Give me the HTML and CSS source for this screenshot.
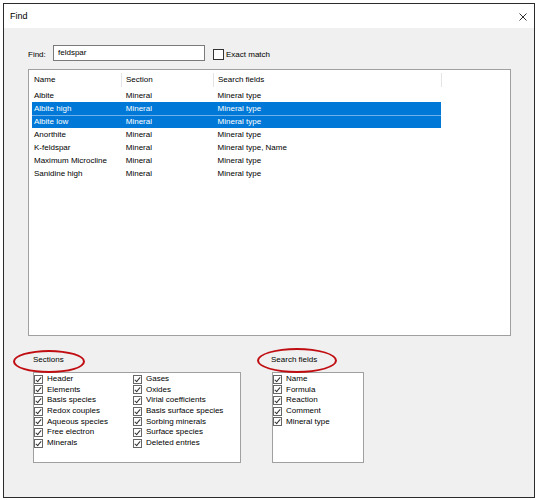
FILE: index.html
```html
<!DOCTYPE html>
<html lang="en">

<head>
  <meta charset="UTF-8">
  <title>Find</title>
  <link rel="stylesheet" href="styles.css">
</head>

<body>
  <div class="window">
    <div class="titlebar">
      <span class="title">Find</span>
      <svg class="close" width="8" height="8" viewBox="0 0 8 8">
        <path d="M0.5 0.5 L7.5 7.5 M7.5 0.5 L0.5 7.5" stroke="#333" stroke-width="1" fill="none" />
      </svg>
    </div>

    <div class="content">
      <div class="find-row">
        <span class="find-label">Find:</span>
        <div class="find-input">feldspar</div>
        <span class="box-check"></span>
        <span class="exact">Exact match</span>
      </div>

      <div class="results">
        <div class="results-head">
          <div class="cell c-name">Name</div>
          <div class="cell c-section">Section</div>
          <div class="cell c-fields">Search fields</div>
        </div>
        <div class="row">
          <div class="cell c-name">Albite</div>
          <div class="cell c-section">Mineral</div>
          <div class="cell c-fields">Mineral type</div>
        </div>
        <div class="row selected">
          <div class="cell c-name">Albite high</div>
          <div class="cell c-section">Mineral</div>
          <div class="cell c-fields">Mineral type</div>
        </div>
        <div class="row selected next">
          <div class="cell c-name">Albite low</div>
          <div class="cell c-section">Mineral</div>
          <div class="cell c-fields">Mineral type</div>
        </div>
        <div class="row">
          <div class="cell c-name">Anorthite</div>
          <div class="cell c-section">Mineral</div>
          <div class="cell c-fields">Mineral type</div>
        </div>
        <div class="row">
          <div class="cell c-name">K-feldspar</div>
          <div class="cell c-section">Mineral</div>
          <div class="cell c-fields">Mineral type, Name</div>
        </div>
        <div class="row">
          <div class="cell c-name">Maximum Microcline</div>
          <div class="cell c-section">Mineral</div>
          <div class="cell c-fields">Mineral type</div>
        </div>
        <div class="row">
          <div class="cell c-name">Sanidine high</div>
          <div class="cell c-section">Mineral</div>
          <div class="cell c-fields">Mineral type</div>
        </div>
      </div>

      <div class="groups">
        <div class="group sections">
          <div class="group-label">Sections</div>
          <span class="mark mark-sections"></span>
          <div class="group-box">
            <ul class="checks col-left">
              <li><span class="check"></span>Header</li>
              <li><span class="check"></span>Elements</li>
              <li><span class="check"></span>Basis species</li>
              <li><span class="check"></span>Redox couples</li>
              <li><span class="check"></span>Aqueous species</li>
              <li><span class="check"></span>Free electron</li>
              <li><span class="check"></span>Minerals</li>
            </ul>
            <ul class="checks">
              <li><span class="check"></span>Gases</li>
              <li><span class="check"></span>Oxides</li>
              <li><span class="check"></span>Virial coefficients</li>
              <li><span class="check"></span>Basis surface species</li>
              <li><span class="check"></span>Sorbing minerals</li>
              <li><span class="check"></span>Surface species</li>
              <li><span class="check"></span>Deleted entries</li>
            </ul>
          </div>
        </div>

        <div class="group fields">
          <div class="group-label">Search fields</div>
          <span class="mark mark-fields"></span>
          <div class="group-box">
            <ul class="checks">
              <li><span class="check"></span>Name</li>
              <li><span class="check"></span>Formula</li>
              <li><span class="check"></span>Reaction</li>
              <li><span class="check"></span>Comment</li>
              <li><span class="check"></span>Mineral type</li>
            </ul>
          </div>
        </div>
      </div>
    </div>
  </div>
</body>

</html>
```

FILE: styles.css
```css
body {
  margin: 0;
  background: #fff;
  font-family: "Liberation Sans", Arial, sans-serif;
  font-size: 8px;
  color: #000;
}

.window {
  width: 532px;
  height: 495px;
  margin: 3px 0 0 3px;
  box-sizing: border-box;
  border: 1px solid #2b2b2b;
  display: flex;
  flex-direction: column;
  position: relative;
}

.titlebar {
  height: 24px;
  background: #fff;
  display: flex;
  align-items: center;
  justify-content: space-between;
  padding: 0 7px 0 6px;
}

.title {
  font-size: 9px;
}

.close {
  margin-top: 1px;
}

.content {
  flex: 1;
  background: #f0f0f0;
  padding: 17px 0 0 24px;
}

/* find row */
.find-row {
  display: flex;
  align-items: center;
  height: 16px;
}

.find-label {
  width: 25px;
  margin-top: 2px;
}

.find-input {
  width: 152px;
  height: 16px;
  box-sizing: border-box;
  border: 1px solid #7a7a7a;
  background: #fff;
  padding-left: 4px;
  line-height: 13px;
}

.box-check {
  width: 11px;
  height: 11px;
  box-sizing: border-box;
  border: 1px solid #333;
  background: #fff;
  margin: 2px 2px 0 8px;
}

.exact {
  margin-top: 2px;
}

/* result list */
.results {
  width: 483px;
  height: 267px;
  box-sizing: border-box;
  margin-top: 8px;
  border: 1px solid #a0a0a0;
  background: #fff;
  padding-left: 3px;
}

.results-head {
  display: flex;
  height: 19px;
  padding-top: 1px;
  box-sizing: border-box;
  align-items: center;
}

.results-head .cell {
  height: 14px;
  line-height: 14px;
  border-right: 1px solid #e5e5e5;
}

.row {
  display: flex;
  height: 13px;
  line-height: 13px;
  width: 409px;
}

.row.selected {
  background: #0078d7;
  color: #fff;
}

.row.next {
  box-shadow: inset 0 1px 0 #6fb0ea;
}

.cell {
  box-sizing: border-box;
  padding-left: 4px;
  white-space: nowrap;
}

.c-name {
  width: 90px;
  padding-left: 2px;
}

.c-section {
  width: 92px;
}

.c-fields {
  width: 228px;
}

/* option groups */
.groups {
  display: flex;
  margin-top: 18px;
  margin-left: 5px;
}

.group {
  position: relative;
}

.group-label {
  height: 12px;
  line-height: 12px;
}

.group-box {
  margin-top: 6px;
  height: 91px;
  box-sizing: border-box;
  border: 1px solid #a0a0a0;
  background: #fff;
  display: flex;
  padding-top: 1px;
}

.sections .group-box {
  width: 208px;
}

.fields {
  margin-left: 30px;
}

.fields .group-box {
  width: 92px;
  margin-left: 1px;
}

.checks {
  list-style: none;
  margin: 0;
  padding: 0;
}

.col-left {
  width: 99px;
}

.checks li {
  height: 10.67px;
  line-height: 10.67px;
  display: flex;
  align-items: center;
  white-space: nowrap;
}

.check {
  width: 9px;
  height: 9px;
  box-sizing: border-box;
  border: 1px solid #666;
  margin-right: 4px;
  position: relative;
  flex: none;
}

.check::after {
  content: "";
  position: absolute;
  left: 2px;
  top: 0;
  width: 2px;
  height: 5px;
  border: solid #333;
  border-width: 0 1px 1px 0;
  transform: rotate(40deg);
}

/* red annotation rings drawn over the labels */
.mark {
  position: absolute;
  border: 2px solid #c00d12;
  border-radius: 50%;
  box-sizing: border-box;
}

.mark-sections {
  left: -20px;
  top: -4px;
  width: 72px;
  height: 23px;
}

.mark-fields {
  left: -14px;
  top: -6px;
  width: 80px;
  height: 25px;
}
```
